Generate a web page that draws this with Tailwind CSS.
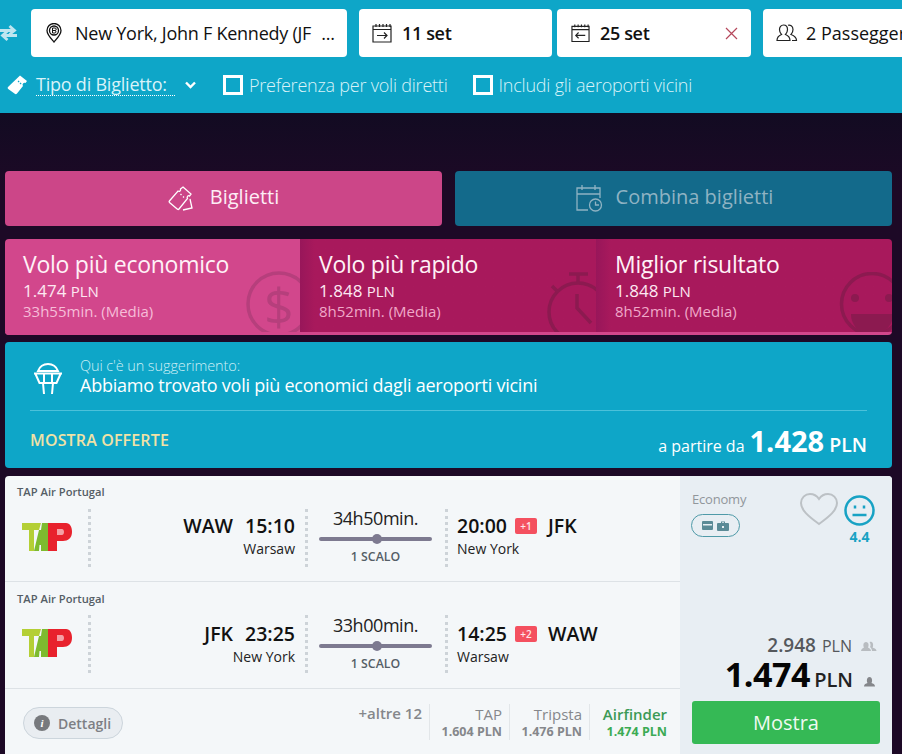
<!DOCTYPE html>
<html lang="it"><head><meta charset="utf-8">
<script src="https://cdn.jsdelivr.net/npm/@tailwindcss/browser@4"></script>
</head>
<body class="m-0">
<div class="w-[902px] h-[754px] overflow-hidden font-['Open_Sans',sans-serif] bg-linear-to-b from-[#120b22] from-[15%] to-[#1d0926] to-[25%]">
  <!-- header -->
  <header class="h-[113px] bg-[#0ea6c8] pt-[9px]">
    <div class="flex h-[48px] w-[1000px]">
      <div class="w-[31px] flex items-center">
        <svg width="17" height="18" viewBox="0 0 17 18" fill="none" stroke="#bfe6f0" stroke-width="2.800"><path d="M0 6.500h14M9.500 2l5 4.500-5 4M17 11.500H3M7.500 7l-5 4.500 5 4.500"/></svg>
      </div>
      <div class="w-[316px] bg-white rounded-[4px] flex items-center pl-[15px] text-[18px] tracking-[-0.25px] text-[#111]">
        <svg width="16" height="20" viewBox="0 0 16 20" fill="none" stroke="#111" stroke-width="1.300" class="mr-[13px]"><path d="M8 19C4 14.500 1 11.500 1 7.500a7 7 0 0 1 14 0c0 4-3 7-7 11.500z"/><circle cx="8" cy="7.500" r="4.500"/><path d="M6.500 5v5M6.500 5H9a1.200 1.200 0 0 1 0 2.500H6.500M9 7.500a1.300 1.300 0 0 1 0 2.500H6.500" stroke-width="1"/></svg>
        <span>New York, John F Kennedy (JF</span><span class="ml-[10px]">...</span>
      </div>
      <div class="ml-[12px] w-[193px] bg-white rounded-[4px] flex items-center pl-[13px] text-[18px] font-semibold tracking-[-0.35px] text-[#111]">
        <svg width="20" height="20" viewBox="0 0 20 20" fill="none" stroke="#222" stroke-width="1.200" class="mr-[10px]"><path d="M1 3h18v16H1zM1 6.500h18M4 1v3M7.500 1v3M11 1v3M14.500 1v3M18 1v3"/><path d="M5 12.500h10M12 9.500l3 3-3 3"/></svg>
        11 set
      </div>
      <div class="ml-[5px] w-[194px] bg-white rounded-[4px] flex items-center pl-[14px] pr-[13px] text-[18px] font-semibold tracking-[-0.35px] text-[#111]">
        <svg width="19" height="20" viewBox="0 0 20 20" fill="none" stroke="#222" stroke-width="1.200" class="mr-[10px]"><path d="M1 3h18v16H1zM1 6.500h18M4 1v3M7.500 1v3M11 1v3M14.500 1v3M18 1v3"/><path d="M15 12.500H5M8 9.500l-3 3 3 3"/></svg>
        25 set
        <svg width="13" height="13" viewBox="0 0 13 13" fill="none" stroke="#b5485c" stroke-width="1.200" class="ml-auto"><path d="M1 1l11 11M12 1L1 12"/></svg>
      </div>
      <div class="ml-[12px] w-[220px] bg-white rounded-[4px] flex items-center pl-[13px] text-[18px] text-[#111]">
        <svg width="22" height="18" viewBox="0 0 22 18" fill="none" stroke="#222" stroke-width="1.200" class="mr-[8px]"><path d="M1 16.500c0-3.500 2-5 4.500-6C4 9 3.500 7.500 3.500 5.500 3.500 3 5 1 7.500 1s4 2 4 4.500c0 2-.5 3.500-2 5 2.500 1 4.500 2.500 4.500 6zM12 1.200c2-.6 5 .6 5 4.300 0 2-.5 3.500-2 5 2.500 1 5.500 2.500 5.500 6H16"/></svg>
        2 Passeggeri
      </div>
    </div>
    <div class="flex items-center h-[34px] mt-[11px] pl-[7px] text-[18px] tracking-[-0.22px] text-[#d9f3f9]">
      <svg width="21" height="20" viewBox="0 0 21 20" fill="#fff" class="mr-[8px]"><path d="M13 0.500l7 5.500-1.500 2a2 2 0 0 0-2.500 3L10 18.500c-.6.800-1.500.8-2.200.300L1.200 14c-.6-.5-.7-1.300-.2-2z"/><path d="M11 6l1.500 1.200M13 8l1.500 1.200" stroke="#0ea6c8" stroke-width="1.200" stroke-dasharray="1.500 1.500"/></svg>
      <span class="border-b border-dotted border-white leading-[20px] pr-[9px] h-[22px] inline-block w-[139px] whitespace-nowrap font-normal">Tipo di Biglietto:</span>
      <svg width="11" height="8" viewBox="0 0 11 8" fill="none" stroke="#fff" stroke-width="2.400" class="ml-[10px] mr-[27px]"><path d="M1 1.500l4.500 4.500L10 1.500"/></svg>
      <span class="w-[20px] h-[20px] border-[3px] border-white block"></span>
      <span class="ml-[6px] font-light">Preferenza per voli diretti</span>
      <span class="ml-[25px] w-[20px] h-[20px] border-[3px] border-white block"></span>
      <span class="ml-[6px] font-light">Includi gli aeroporti vicini</span>
    </div>
  </header>

  <main class="pl-[5px] pr-[10px] pt-[58px]">
    <!-- tabs -->
    <div class="flex justify-between h-[55px]">
      <div class="w-[437px] bg-[#cc4688] rounded-[4px] flex items-center justify-center pl-[3px] pb-[4px] text-[20px] text-[#fdeef5]">
        <svg width="28" height="28" viewBox="0 0 28 28" fill="none" stroke="#fff" stroke-width="1.300" class="mr-[15px] ml-[-4px] mt-[4px]"><path d="M16 2l8 7-1.500 2c-1.500-1-3 1-2 2.500L12 24c-.5.600-1 .600-1.500.200L2.500 17.500c-.5-.5-.5-1-.1-1.500l8.600-10c1.500 1 3-.5 2.500-2z"/><path d="M13.500 9l1 1M16 11.500l1 1" stroke-dasharray="1.500 1.500"/><path d="M23 14l2 9-9 2" /></svg>
        Biglietti
      </div>
      <div class="w-[437px] bg-[#136a8b] rounded-[4px] flex items-center justify-center pl-[2px] pb-[4px] text-[20px] text-[#8fb3c3]">
        <svg width="27" height="27" viewBox="0 0 27 27" fill="none" stroke="#8fb3c3" stroke-width="1.300" class="mr-[13px] mt-[4px]"><path d="M24 13V3H1v22h11M1 9h23M6 0v5M19 0v5"/><circle cx="19.500" cy="20" r="6"/><path d="M19.500 16.500V20h3.500"/></svg>
        Combina biglietti
      </div>
    </div>

    <!-- result tabs -->
    <div class="mt-[13px] h-[96px] flex rounded-[4px] overflow-hidden text-white">
      <div class="relative w-[295px] bg-[#d2478c] pl-[18px] pt-[9px] overflow-hidden border-b-[3px] border-[#d2478c]">
        <div class="text-[23px] leading-[33px] tracking-[-0.26px] text-[#fff1f7]">Volo più economico</div>
        <div class="text-[17px] leading-[20px] text-[#fde8f1]">1.474 <span class="text-[15px]">PLN</span></div>
        <div class="text-[15px] leading-[20px] text-[#f6bdd8]">33h55min. (Media)</div>
        <svg width="66" height="66" viewBox="0 0 66 66" fill="none" stroke="#b63f7c" stroke-width="3.500" class="absolute left-[241px] top-[32px]"><circle cx="33" cy="33" r="31"/></svg>
        <div class="absolute left-[259px] top-[36px] text-[52px] leading-[60px] text-[#b63f7c] font-normal">$</div>
      </div>
      <div class="relative w-[296px] bg-linear-to-r from-[#98165a] to-[#a8195c] to-[5%] pl-[19px] pt-[9px] overflow-hidden border-b-[3px] border-[#d2478c]">
        <div class="text-[23px] leading-[33px] tracking-[-0.26px] text-[#fff1f7]">Volo più rapido</div>
        <div class="text-[17px] leading-[20px] text-[#fde8f1]">1.848 <span class="text-[15px]">PLN</span></div>
        <div class="text-[15px] leading-[20px] text-[#f0a9c9]">8h52min. (Media)</div>
        <svg width="62" height="64" viewBox="0 0 62 64" fill="none" stroke="#8c1a50" stroke-width="3.500" class="absolute left-[247px] top-[33px]"><circle cx="31" cy="40" r="29"/><path d="M22 2h19M31 2v9M5 14l6 6M30 22v14l14 15"/></svg>
      </div>
      <div class="relative flex-1 bg-linear-to-r from-[#98165a] to-[#a8195c] to-[5%] pl-[19px] pt-[9px] overflow-hidden border-b-[3px] border-[#d2478c]">
        <div class="text-[23px] leading-[33px] tracking-[-0.26px] text-[#fff1f7]">Miglior risultato</div>
        <div class="text-[17px] leading-[20px] text-[#fde8f1]">1.848 <span class="text-[15px]">PLN</span></div>
        <div class="text-[15px] leading-[20px] text-[#f0a9c9]">8h52min. (Media)</div>
        <svg width="66" height="66" viewBox="0 0 66 66" class="absolute left-[243px] top-[33px]"><circle cx="33" cy="32" r="30.500" fill="none" stroke="#8c1a50" stroke-width="3.500"/><circle cx="16" cy="26" r="4" fill="#8c1a50"/><circle cx="50" cy="26" r="4" fill="#8c1a50"/><path d="M12 42h42c0 13-10 20-21 20s-21-7-21-20z" fill="#8c1a50"/></svg>
      </div>
    </div>

    <!-- suggestion -->
    <div class="mt-[7px] h-[126px] bg-[#0ea6c8] rounded-[4px] px-[25px] text-white">
      <div class="flex h-[69px] items-center pt-[4px] border-b border-[#4bc1da]">
        <svg width="30" height="31" viewBox="0 0 30 31" fill="none" stroke="#fff" stroke-width="2" class="ml-[3px] mr-[17px]"><path d="M5 8C7 3 11 1 15 1s8 2 10 7zM1 10.500h28M2.500 11l4 9h17l4-9M11 11.500v8M19 11.500v8M10 20l1 11M20 20l-1 11"/></svg>
        <div class="mt-[-1px]">
          <div class="text-[14.500px] leading-[16px] font-light text-[#cdeff6] tracking-[-0.1px]">Qui c'è un suggerimento:</div>
          <div class="text-[18px] leading-[24px] tracking-[-0.24px] mt-[-1px]">Abbiamo trovato voli più economici dagli aeroporti vicini</div>
        </div>
      </div>
      <div class="flex justify-between items-center h-[57px]">
        <span class="text-[16px] font-semibold text-[#f0e2a6] tracking-[0.15px]">MOSTRA OFFERTE</span>
        <span class="text-[16px] flex items-baseline pt-[3px]">a partire da <b class="text-[29px] leading-[40px] font-bold ml-[5px] mr-[5px]">1.428</b> <span class="text-[19.500px] font-semibold">PLN</span></span>
      </div>
    </div>

    <!-- flight card -->
    <div class="mt-[8px] flex rounded-t-[4px] overflow-hidden bg-[#f4f7f9] h-[278px]">
      <div class="w-[675px]">
        <!-- leg 1 -->
        <div class="h-[106px] border-b border-[#dde2e6] relative pl-[12px] pt-[8px]">
          <div class="text-[11.200px] leading-[15px] font-semibold text-[#555e66]">TAP Air Portugal</div>
          <div class="flex h-[58px] mt-[10px]">
            <svg width="50" height="28" viewBox="0 0 50 28" class="ml-[5px] mt-[14px] mr-[2px] shrink-0"><path d="M0 0H19L17 7H12V28H7V7H0z" fill="#b4cf35"/><path d="M12 28L17 7H19L20 0H26V28H19V22H17.500L17 28z" fill="#7dbb2f"/><path d="M26 0H44C48 0 50 4 50 9C50 15 46 18 41 18H35V28H26z" fill="#e8222d"/><path d="M35 6H40C41 6 42 7 42 9S41 12 40 12H35z" fill="#f4a0a5"/></svg>
            <div class="ml-[14px] w-0 border-l-[3px] border-dotted border-[#cdd3d8]"></div>
            <div class="w-[214px] text-right pr-[10px]">
              <div class="text-[19.500px] leading-[26px] mt-[4px] font-semibold text-[#111]"><span class="mr-[12px]">WAW</span>15:10</div>
              <div class="text-[14px] leading-[20px] text-[#222]">Warsaw</div>
            </div>
            <div class="w-0 border-l-[3px] border-dotted border-[#cdd3d8]"></div>
            <div class="w-[137px] pl-[11px] pr-[13px] text-center">
              <div class="text-[18px] leading-[24px] text-[#222] tracking-[-0.45px] mt-[-3px]">34h50min.</div>
              <div class="relative h-[4px] bg-[#7d7a90] rounded-full mt-[7px]"><span class="absolute left-[53px] top-[-3px] w-[10px] h-[10px] rounded-full bg-[#7d7a90]"></span></div>
              <div class="text-[12.300px] leading-[16px] font-semibold text-[#555e66] mt-[8px]">1 SCALO</div>
            </div>
            <div class="w-0 border-l-[3px] border-dotted border-[#cdd3d8]"></div>
            <div class="pl-[9px]">
              <div class="flex items-center text-[19.500px] leading-[26px] mt-[4px] font-semibold text-[#111]">20:00<span class="ml-[8px] w-[22px] h-[16px] bg-[#f4505f] rounded-[2px] text-[10px] leading-[16px] text-center text-[#ffe5e8]">+1</span><span class="ml-[11px] font-semibold">JFK</span></div>
              <div class="text-[14px] leading-[20px] text-[#222]">New York</div>
            </div>
          </div>
        </div>
        <!-- leg 2 -->
        <div class="h-[107px] border-b border-[#dde2e6] relative pl-[12px] pt-[9px]">
          <div class="text-[11.200px] leading-[15px] font-semibold text-[#555e66]">TAP Air Portugal</div>
          <div class="flex h-[58px] mt-[9px]">
            <svg width="50" height="28" viewBox="0 0 50 28" class="ml-[5px] mt-[14px] mr-[2px] shrink-0"><path d="M0 0H19L17 7H12V28H7V7H0z" fill="#b4cf35"/><path d="M12 28L17 7H19L20 0H26V28H19V22H17.500L17 28z" fill="#7dbb2f"/><path d="M26 0H44C48 0 50 4 50 9C50 15 46 18 41 18H35V28H26z" fill="#e8222d"/><path d="M35 6H40C41 6 42 7 42 9S41 12 40 12H35z" fill="#f4a0a5"/></svg>
            <div class="ml-[14px] w-0 border-l-[3px] border-dotted border-[#cdd3d8]"></div>
            <div class="w-[214px] text-right pr-[10px]">
              <div class="text-[19.500px] leading-[26px] mt-[6px] font-semibold text-[#111]"><span class="mr-[12px]">JFK</span>23:25</div>
              <div class="text-[14px] leading-[20px] text-[#222]">New York</div>
            </div>
            <div class="w-0 border-l-[3px] border-dotted border-[#cdd3d8]"></div>
            <div class="w-[137px] pl-[11px] pr-[13px] text-center">
              <div class="text-[18px] leading-[24px] text-[#222] tracking-[-0.45px] mt-[-2px]">33h00min.</div>
              <div class="relative h-[4px] bg-[#7d7a90] rounded-full mt-[7px]"><span class="absolute left-[53px] top-[-3px] w-[10px] h-[10px] rounded-full bg-[#7d7a90]"></span></div>
              <div class="text-[12.300px] leading-[16px] font-semibold text-[#555e66] mt-[8px]">1 SCALO</div>
            </div>
            <div class="w-0 border-l-[3px] border-dotted border-[#cdd3d8]"></div>
            <div class="pl-[9px]">
              <div class="flex items-center text-[19.500px] leading-[26px] mt-[6px] font-semibold text-[#111]">14:25<span class="ml-[8px] w-[22px] h-[16px] bg-[#f4505f] rounded-[2px] text-[10px] leading-[16px] text-center text-[#ffe5e8]">+2</span><span class="ml-[11px] font-semibold">WAW</span></div>
              <div class="text-[14px] leading-[20px] text-[#222]">Warsaw</div>
            </div>
          </div>
        </div>
        <!-- footer -->
        <div class="flex items-start pl-[18px] pr-[13px] pt-[18px]">
          <div class="h-[32px] w-[100px] rounded-full bg-[#e9edf1] border border-[#ccd5dc] flex items-center pl-[10px] text-[14px] font-semibold text-[#7d7f84]">
            <span class="w-[16px] h-[16px] rounded-full bg-[#77797d] text-white text-[11px] leading-[16px] text-center font-bold font-['Liberation_Serif',serif] italic mr-[8px]">i</span>Dettagli
          </div>
          <div class="ml-auto flex mt-[-3px] text-right">
            <div class="pr-[7px] h-[36px] border-r border-[#e2e6e9] text-[15px] leading-[18px] font-semibold text-[#85878b]">+altre 12</div>
            <div class="pr-[7px] w-[80px] h-[36px] border-r border-[#e2e6e9]"><div class="text-[15px] leading-[20px] text-[#85878b]">TAP</div><div class="text-[12.500px] leading-[16px] font-bold text-[#85878b]">1.604 PLN</div></div>
            <div class="pr-[7px] w-[80px] h-[36px] border-r border-[#e2e6e9]"><div class="text-[15px] leading-[20px] text-[#85878b]">Tripsta</div><div class="text-[12.500px] leading-[16px] font-bold text-[#85878b]">1.476 PLN</div></div>
            <div class="w-[77px] h-[36px]"><div class="text-[15px] leading-[20px] font-semibold text-[#3c9a56]">Airfinder</div><div class="text-[12.500px] leading-[16px] font-bold text-[#3cab55]">1.474 PLN</div></div>
          </div>
        </div>
      </div>
      <!-- price column -->
      <div class="w-[212px] bg-[#e8eef3] px-[12px] relative">
        <div class="text-[13px] leading-[18px] text-[#91969b] mt-[14px] tracking-[-0.2px]">Economy</div>
        <div class="w-[49px] h-[23px] mt-[6px] ml-[-1px] rounded-full border border-[#4f9aa8] flex items-center justify-center gap-[4px]">
          <svg width="11" height="9" viewBox="0 0 11 9" fill="#5b8a96"><path fill-rule="evenodd" d="M1 0h9a1 1 0 0 1 1 1v7a1 1 0 0 1-1 1H1a1 1 0 0 1-1-1V1a1 1 0 0 1 1-1zm0 3v1.500h9V3z"/></svg>
          <svg width="12" height="10" viewBox="0 0 12 10" fill="#5b8a96"><path fill-rule="evenodd" d="M4 2V.500h4V2h3a1 1 0 0 1 1 1v6a1 1 0 0 1-1 1H1a1 1 0 0 1-1-1V3a1 1 0 0 1 1-1zm1 0h2V1.300H5zM5 5v2h2V5z"/></svg>
        </div>
        <svg width="38" height="33" viewBox="0 0 38 33" fill="none" stroke="#bcc1c5" stroke-width="2" class="absolute left-[120px] top-[17px]"><path d="M19 31C8 23 1 17 1 10c0-5 4-9 9-9 4 0 7 2 9 5 2-3 5-5 9-5 5 0 9 4 9 9 0 7-7 13-18 21z"/></svg>
        <svg width="31" height="31" viewBox="0 0 31 31" fill="none" stroke="#17a2c4" stroke-width="2.500" class="absolute left-[164px] top-[19px]"><circle cx="15.500" cy="15.500" r="14"/><path d="M11 10.500v3M20 10.500v3M8.500 20h14"/></svg>
        <div class="absolute left-[164px] top-[52px] w-[31px] text-center text-[14px] leading-[18px] font-bold text-[#17a2c4]">4.4</div>
        <div class="absolute right-[15px] top-[156px] flex items-baseline text-[19px] leading-[26px] text-[#55585c]"><span class="font-semibold">2.948</span><span class="ml-[6px] text-[16px]">PLN</span>
          <svg width="16" height="11" viewBox="0 0 16 11" fill="#b8bcc0" class="ml-[9px]"><path d="M0 10c0-2 2-3 3-3.500C2 5 2 1 5 1s3 4 2 5.500c1 .5 3 1.500 3 3.500zM11 10c0-2-1-3-2-4 1-1 .5-4-.5-5 3-1 4 2 3.500 4 0 1-.5 1.500-.5 1.500 1 .5 4 1 4 3.500z"/></svg></div>
        <div class="absolute right-[17px] top-[183px] flex items-baseline leading-[30px] text-[#050505]"><span class="text-[34px] font-bold tracking-[-0.4px]">1.474</span><span class="ml-[4px] text-[20px] font-semibold text-[#222]">PLN</span>
          <svg width="11" height="11" viewBox="0 0 11 11" fill="#85878b" class="ml-[11px]"><path d="M0 10.500c0-2.500 2-3 3.500-3.500C2.500 5.500 2.500 1 5.500 1s3 4.500 2 6c1.500.5 3.500 1 3.500 3.500z"/></svg></div>
        <div class="absolute left-[12px] top-[225px] w-[188px] h-[43px] bg-[#35b955] rounded-[3px] text-center text-[#f0faf2] text-[20px] leading-[43px]">Mostra</div>
      </div>
    </div>
  </main>
</div>
</body></html>
